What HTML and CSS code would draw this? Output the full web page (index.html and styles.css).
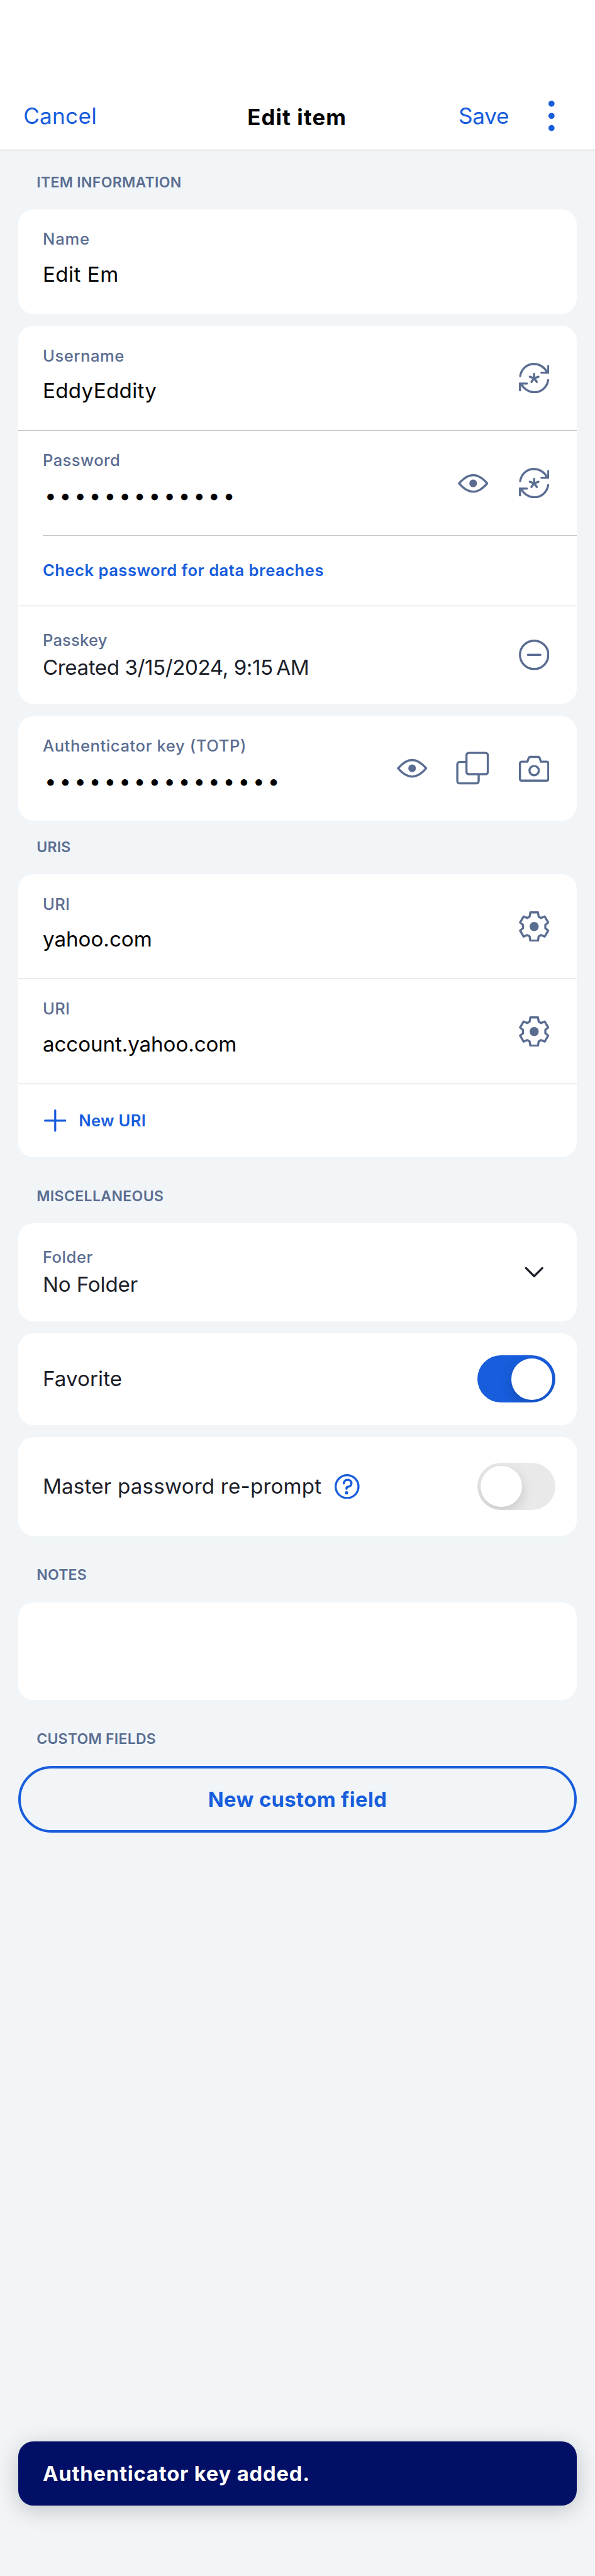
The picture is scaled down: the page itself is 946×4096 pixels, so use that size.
FILE: index.html
```
<!DOCTYPE html>
<html lang="en">
<head>
<meta charset="utf-8">
<title>Edit item</title>
<link rel="stylesheet" href="styles.css">
</head>
<body>
<svg class="defs" aria-hidden="true">
  <symbol id="generate" viewBox="0 0 60 60"><g fill="none" stroke="currentColor" stroke-width="4.2" stroke-linecap="round" stroke-linejoin="miter"><path d="M2.600 26C4.500 12.500 15.500 2.200 29.500 2.200c11.500 0 21.300 6.700 26 16.300"/><path d="M57.900 6V19.300H44.300"/><path d="M57.500 34C55.500 47.500 44.500 57.800 30.500 57.800c-11 0-20.800-6.500-25.700-16"/><path d="M2.200 54V40.600H15.800"/><path d="M30 21.500V30M21.500 27.300L30 30M38.500 27.300L30 30M24.800 37.500L30 30M35.200 37.500L30 30"/></g></symbol>
  <symbol id="eye" viewBox="0 0 60 60"><path d="M2.300 30.500C10 21.500 18.500 14.200 30 14.200S50 21.500 57.700 30.500C50 39.500 41.500 46.800 30 46.800S10 39.500 2.300 30.500Z" fill="none" stroke="currentColor" stroke-width="4.200" stroke-linejoin="round"/><circle cx="30" cy="30.500" r="7.500" fill="currentColor"/></symbol>
  <symbol id="copy" viewBox="0 0 66 66"><g fill="none" stroke="currentColor" stroke-width="4.200"><rect x="20.600" y="2.600" width="42" height="42" rx="4.500"/><path d="M20.600 20.600H7.100a4.500 4.500 0 0 0-4.500 4.500v33a4.500 4.500 0 0 0 4.500 4.500h33a4.500 4.500 0 0 0 4.500-4.500V44.600"/></g></symbol>
  <symbol id="camera" viewBox="0 0 60 60"><g fill="none" stroke="currentColor" stroke-width="4.200"><path d="M16.700 17.500L19.200 10.300Q20 8.100 22.200 8.100H37.800Q40 8.100 40.800 10.300L43.300 17.500H54.900a3 3 0 0 1 3 3V51.800a3 3 0 0 1-3 3H5.100a3 3 0 0 1-3-3V20.500a3 3 0 0 1 3-3Z"/><circle cx="30" cy="35" r="9.200"/></g></symbol>
  <symbol id="minus" viewBox="0 0 60 60"><g fill="none" stroke="currentColor" stroke-width="4.200" stroke-linecap="round"><circle cx="30" cy="30" r="27.900"/><path d="M17.800 30H42.200"/></g></symbol>
  <symbol id="gear" viewBox="0 0 60 60"><path d="M22.500 2.100H37.500L38.900 10.600 43.500 13.200 50.800 10.300 57.700 22 52 26.700V33.300L57.700 38 50.800 49.700 43.500 46.800 38.900 49.400 37.500 57.900H22.500L21.100 49.400 16.500 46.800 9.200 49.700 2.300 38 8 33.300V26.700L2.300 22 9.200 10.300 16.500 13.200 21.100 10.600Z" fill="none" stroke="currentColor" stroke-width="4.200" stroke-linejoin="round"/><circle cx="30" cy="30" r="9" fill="currentColor"/></symbol>
</svg>
<header class="navbar">
  <a class="nav-action cancel">Cancel</a>
  <h1 class="title">Edit item</h1>
  <div class="nav-right">
    <a class="nav-action save">Save</a>
    <svg class="more" viewBox="0 0 12 60"><g fill="currentColor"><circle cx="6" cy="6" r="6"/><circle cx="6" cy="30" r="6"/><circle cx="6" cy="54" r="6"/></g></svg>
  </div>
</header>
<main class="content">
  <h2 class="section first">ITEM INFORMATION</h2>
  <div class="card">
    <div class="row field">
      <div class="text"><span class="label t-name">Name</span><span class="value black t-editem">Edit Em</span></div>
    </div>
  </div>
  <div class="card">
    <div class="row field">
      <div class="text"><span class="label t-username">Username</span><span class="value black t-eddy">EddyEddity</span></div>
      <div class="actions"><svg class="icon"><use href="#generate"/></svg></div>
    </div>
    <hr class="divider">
    <div class="row field">
      <div class="text"><span class="label t-password">Password</span><span class="dots">•••••••••••••</span></div>
      <div class="actions"><svg class="icon"><use href="#eye"/></svg><svg class="icon"><use href="#generate"/></svg></div>
    </div>
    <hr class="divider inset">
    <div class="row link-row"><a class="link t-check">Check password for data breaches</a></div>
    <hr class="divider">
    <div class="row compact">
      <div class="text"><span class="label t-passkey">Passkey</span><span class="value t-created">Created 3/15/2024, 9:15&#8239;AM</span></div>
      <div class="actions"><svg class="icon"><use href="#minus"/></svg></div>
    </div>
  </div>
  <div class="card">
    <div class="row field">
      <div class="text"><span class="label t-totp">Authenticator key (TOTP)</span><span class="dots">••••••••••••••••</span></div>
      <div class="actions"><svg class="icon"><use href="#eye"/></svg><svg class="icon copy"><use href="#copy"/></svg><svg class="icon"><use href="#camera"/></svg></div>
    </div>
  </div>
  <h2 class="section uris">URIS</h2>
  <div class="card">
    <div class="row field">
      <div class="text"><span class="label t-uri">URI</span><span class="value black t-yahoo">yahoo.com</span></div>
      <div class="actions"><svg class="icon"><use href="#gear"/></svg></div>
    </div>
    <hr class="divider">
    <div class="row field">
      <div class="text"><span class="label t-uri">URI</span><span class="value black t-account">account.yahoo.com</span></div>
      <div class="actions"><svg class="icon"><use href="#gear"/></svg></div>
    </div>
    <hr class="divider">
    <div class="row add-row">
      <svg class="plus" viewBox="0 0 44 44"><path d="M22 2V42M2 22H42" fill="none" stroke="currentColor" stroke-width="4" stroke-linecap="round"/></svg>
      <a class="link t-newuri">New URI</a>
    </div>
  </div>
  <h2 class="section misc">MISCELLANEOUS</h2>
  <div class="card">
    <div class="row compact">
      <div class="text"><span class="label t-folder">Folder</span><span class="value t-nofolder">No Folder</span></div>
      <div class="actions"><svg class="icon chevron" viewBox="0 0 60 60"><path d="M14 21.500L30 37.500 46 21.500" fill="none" stroke="currentColor" stroke-width="4.200" stroke-linecap="round" stroke-linejoin="round"/></svg></div>
    </div>
  </div>
  <div class="card">
    <div class="row toggle-row favorite">
      <span class="value t-favorite">Favorite</span>
      <span class="toggle on"><i class="knob"></i></span>
    </div>
  </div>
  <div class="card">
    <div class="row toggle-row reprompt">
      <span class="value t-master">Master password re-prompt</span>
      <svg class="help" viewBox="0 0 48 48"><circle cx="24" cy="24" r="22" fill="none" stroke="currentColor" stroke-width="4"/><path d="M17.700 17.800C17.900 13.800 20.600 11 25 11c4.300 0 7.400 2.800 7.400 6.700 0 3.700-2.600 6.300-6.300 6.600-2.100.2-3.100 1-3.100 2.700v1.300" fill="none" stroke="currentColor" stroke-width="4.200" stroke-linecap="round"/><circle cx="23" cy="36" r="3.200" fill="currentColor"/></svg>
      <span class="toggle"><i class="knob"></i></span>
    </div>
  </div>
  <h2 class="section notes">NOTES</h2>
  <div class="card notes-card"></div>
  <h2 class="section custom">CUSTOM FIELDS</h2>
  <button class="outline-button">New custom field</button>
</main>
<div class="toast">Authenticator key added.</div>
</body>
</html>
```
FILE: styles.css
```
/* 1rem is ten design pixels of the 1170px-wide layout */
html {
  font-size: 8.087px;
}

* {
  box-sizing: border-box;
}

body {
  margin: 0;
  min-height: 100vh;
  display: flex;
  flex-direction: column;
  background: #f1f5f8;
  color: #1b2029;
  font-family: Inter, "Liberation Sans", sans-serif;
}

.defs {
  position: absolute;
  width: 0;
  height: 0;
}

.navbar {
  height: 29.5rem;
  flex: none;
  padding: 16.6rem 7.9rem 0 4.6rem;
  display: grid;
  grid-template-columns: 1fr auto 1fr;
  align-items: start;
  background: #fff;
  border-bottom: 1px solid #b2b2b2;
}

.nav-action {
  color: #175ddc;
  font-size: 4.35rem;
  line-height: 6rem;
  padding-top: 3.2rem;
}

.cancel {
  letter-spacing: 0.03rem;
}

.save {
  letter-spacing: -0.03rem;
}

.title {
  margin: 0;
  padding: 3.4rem 0 0 3.1rem;
  font-size: 4.3rem;
  font-weight: 700;
  letter-spacing: 0.14rem;
  line-height: 6rem;
  color: #000;
}

.nav-right {
  display: flex;
  justify-content: flex-end;
  gap: 7.8rem;
}

.more {
  width: 1.2rem;
  height: 6rem;
  margin-top: 3.2rem;
  color: #175ddc;
}

.content {
  padding: 0 3.6rem;
  display: flex;
  flex-direction: column;
  gap: 2.4rem;
}

.section {
  margin: 0.86rem 0 0.94rem;
  padding-left: 3.6rem;
  height: 4rem;
  font-size: 2.85rem;
  font-weight: 600;
  letter-spacing: 0.03rem;
  line-height: 4.1rem;
  color: #5a6d91;
}

.section.first {
  margin-top: 4.36rem;
  letter-spacing: 0.038rem;
}

.section.misc {
  margin-top: 3.26rem;
  letter-spacing: 0.045rem;
}

.section.notes {
  margin-top: 3.3rem;
}

.section.custom {
  margin-top: 3.26rem;
}

.card {
  background: #fff;
  border-radius: 3rem;
  overflow: hidden;
}

.divider {
  width: auto;
  height: 1px;
  margin: 0;
  border: 0;
  background: #c6c6c8;
}

.divider.inset {
  margin-left: 4.8rem;
}

.row {
  display: flex;
  align-items: center;
  padding: 0 5.4rem 0 4.8rem;
}

.text {
  flex: 1;
  align-self: flex-start;
  display: flex;
  flex-direction: column;
}

.field {
  height: 20.5rem;
}

.field .text {
  padding-top: 3.87rem;
  gap: 2.25rem;
}

.compact {
  height: 19.2rem;
}

.compact .text {
  padding-top: 4.65rem;
  gap: 0.75rem;
}

.label {
  font-size: 3.16rem;
  font-weight: 550;
  line-height: 4rem;
  color: #5a6d91;
}

.value {
  font-size: 4.1rem;
  line-height: 5.4rem;
}

.black {
  color: #000;
}

.dots {
  padding-left: 0.37rem;
  font-size: 4.1rem;
  line-height: 5.4rem;
  letter-spacing: 0.62rem;
  color: #000;
}

/* Tracking per string */
.t-name { letter-spacing: 0.11rem; }
.t-username { letter-spacing: 0.07rem; }
.t-password { letter-spacing: 0.055rem; }
.t-passkey { letter-spacing: 0.025rem; }
.t-totp { letter-spacing: 0.075rem; }
.t-uri { letter-spacing: 0.04rem; }
.t-folder { letter-spacing: 0.07rem; }
.t-editem { letter-spacing: 0.06rem; }
.t-eddy { letter-spacing: 0.04rem; }
.t-created { letter-spacing: -0.052rem; }
.t-yahoo { letter-spacing: 0; }
.t-account { letter-spacing: -0.01rem; }
.t-nofolder { letter-spacing: -0.017rem; }
.t-favorite { letter-spacing: 0.01rem; }
.t-master { letter-spacing: 0.024rem; }

.actions {
  display: flex;
  align-items: center;
  gap: 6rem;
  color: #5a6d91;
}

.icon {
  width: 6rem;
  height: 6rem;
}

.icon.copy {
  width: 6.6rem;
  height: 6.6rem;
  margin: 0 -0.3rem;
}

.chevron {
  color: #1b2029;
}

.link {
  font-size: 3.16rem;
  font-weight: 600;
  line-height: 4rem;
  color: #175ddc;
}

.t-check {
  letter-spacing: 0.064rem;
}

.t-newuri {
  letter-spacing: 0.04rem;
}

.link-row {
  height: 13.75rem;
}

.add-row {
  height: 14.4rem;
  gap: 2.5rem;
  padding-left: 5rem;
}

.plus {
  width: 4.4rem;
  height: 4.4rem;
  color: #175ddc;
}

.toggle-row {
  padding-right: 4.2rem;
}

.favorite {
  height: 18rem;
}

.reprompt {
  height: 19.45rem;
}

.help {
  width: 4.9rem;
  height: 4.9rem;
  margin-left: 2.6rem;
  color: #175ddc;
}

.toggle {
  width: 15.3rem;
  height: 9.3rem;
  margin-left: auto;
  padding: 0.6rem;
  display: flex;
  border-radius: 4.65rem;
  background: #e9e9ea;
  overflow: hidden;
}

.toggle.on {
  justify-content: flex-end;
  background: #175ddc;
}

.knob {
  width: 8.1rem;
  height: 8.1rem;
  border-radius: 50%;
  background: #fff;
  box-shadow: 0 0.9rem 2.4rem rgba(0, 0, 0, 0.15);
}

.notes-card {
  height: 19.2rem;
}

.outline-button {
  height: 13.15rem;
  padding: 0;
  border: 0.5rem solid #175ddc;
  border-radius: 6.6rem;
  background: transparent;
  color: #175ddc;
  font-family: inherit;
  font-size: 4.05rem;
  font-weight: 700;
  letter-spacing: 0.05rem;
}

.toast {
  height: 12.7rem;
  margin: auto 3.6rem 13.8rem;
  padding-left: 4.8rem;
  display: flex;
  align-items: center;
  border-radius: 3rem;
  background: #020f66;
  box-shadow: 0 0.9rem 4.5rem rgba(0, 0, 0, 0.2);
  color: #fff;
  font-size: 4.05rem;
  font-weight: 700;
  letter-spacing: 0.1rem;
}
```
